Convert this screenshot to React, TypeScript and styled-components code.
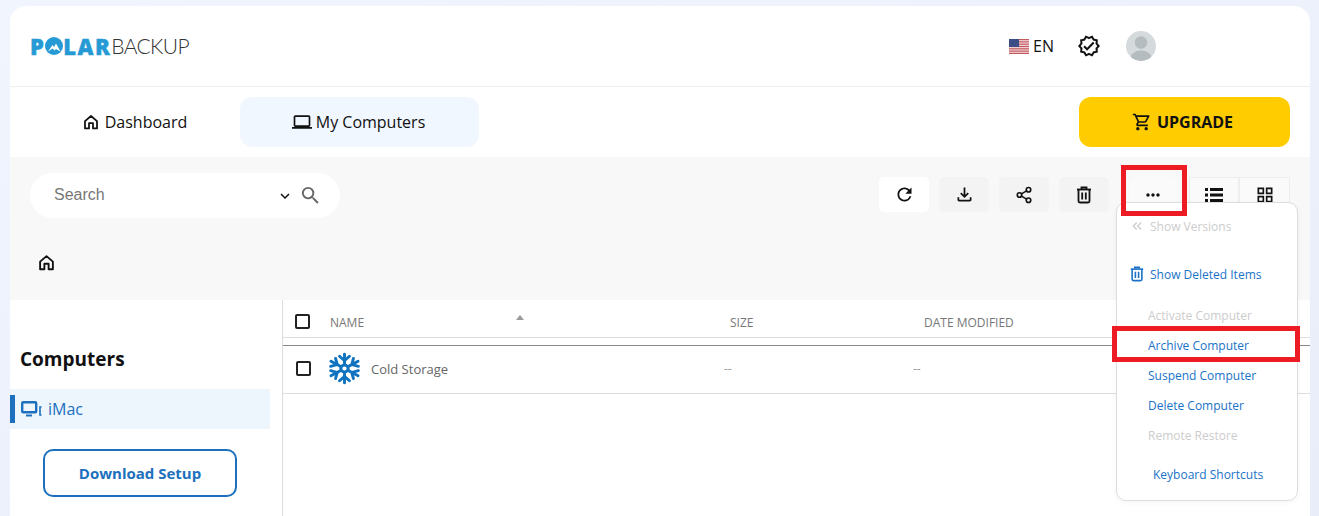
import React from 'react';
import styled, { createGlobalStyle } from 'styled-components';
import {
  MdOutlineFileDownload,
  MdOutlineGridView,
  MdOutlineLaptop,
  MdOutlineShoppingCart,
  MdOutlineVerified,
  MdRefresh,
  MdKeyboardArrowDown,
  MdSearch,
  MdMoreHoriz,
  MdKeyboardDoubleArrowLeft,
} from 'react-icons/md';
import { Share2 } from 'lucide-react';

const GlobalStyle = createGlobalStyle`
  html, body {
    margin: 0;
    padding: 0;
    height: 516px;
    overflow: hidden;
    font-family: "Open Sans", "Noto Sans", sans-serif;
  }
  * {
    box-sizing: border-box;
  }
`;

const HomeIcon = ({ size = 16 }: { size?: number }) => (
  <svg width={size} height={size} viewBox="0 0 20 20" fill="none" stroke="currentColor" strokeWidth="2.2" strokeLinejoin="round">
    <path d="M2.5 9 L10 2.5 L17.5 9 V18 H12.5 V11.5 H7.5 V18 H2.5 Z" />
  </svg>
);

const TrashIcon = ({ size = 18 }: { size?: number }) => (
  <svg width={size} height={size} viewBox="0 0 18 18" fill="none" stroke="currentColor" strokeWidth="1.8">
    <path d="M2 3.5 H16" />
    <path d="M6.5 3 V1.5 H11.5 V3" />
    <path d="M3.5 3.5 V15 Q3.5 16.5 5 16.5 H13 Q14.5 16.5 14.5 15 V3.5" />
    <path d="M7.2 6.5 V13.5 M10.8 6.5 V13.5" />
  </svg>
);

const ListIcon = () => (
  <svg width="18" height="14" viewBox="0 0 18 14" fill="currentColor">
    {[0, 5.5, 11].map((y) => (
      <g key={y}>
        <rect y={y} width="3" height="3" />
        <rect x="5" y={y} width="13" height="3" />
      </g>
    ))}
  </svg>
);

const FlagIcon = () => (
  <svg width="20" height="15" viewBox="0 0 20 15">
    <rect width="20" height="15" fill="#f4dfe0" />
    {[0, 2.3, 4.6, 6.9, 9.2, 11.5, 13.8].map((y) => (
      <rect key={y} y={y} width="20" height="1.2" fill="#c4585f" />
    ))}
    <rect width="10" height="8" fill="#3f4d86" />
  </svg>
);

const AvatarIcon = () => (
  <svg width="30" height="30" viewBox="0 0 30 30">
    <defs>
      <clipPath id="avatar-clip">
        <circle cx="15" cy="15" r="15" />
      </clipPath>
    </defs>
    <g clipPath="url(#avatar-clip)">
      <rect width="30" height="30" fill="#d5dadd" />
      <circle cx="15" cy="11.5" r="6.2" fill="#b4bcbf" />
      <ellipse cx="15" cy="27" rx="10.5" ry="7.5" fill="#b4bcbf" />
    </g>
  </svg>
);

const PeakIcon = () => (
  <svg width="18" height="18" viewBox="0 0 18 18">
    <circle cx="9" cy="9" r="9" fill="#259ad4" />
    <path d="M3 14.5 L7.5 8 L9 10 L11 6.5 L15.5 14.5 L11 12 L9.5 13.5 L7.5 11.5 Z" fill="#ffffff" />
  </svg>
);

const DevicesIcon = () => (
  <svg width="22" height="18" viewBox="0 0 22 18" fill="none" stroke="#1c70bd">
    <rect x="1.2" y="2.2" width="14" height="10" rx="1" strokeWidth="2.4" />
    <path d="M5 15.5 H11" strokeWidth="2" />
    <path d="M20.5 7 H19 V15 H20.5" strokeWidth="1.6" />
  </svg>
);

const SnowflakeIcon = () => (
  <svg width="33" height="33" viewBox="-16.5 -16.5 33 33" fill="none" stroke="#0f73c0" strokeWidth="2.7" strokeLinecap="round">
    <g transform="scale(1.08 1)">
      {[0, 60, 120, 180, 240, 300].map((a) => (
        <g key={a} transform={`rotate(${a})`}>
          <path d="M0 -4 V-14.5" />
          <path d="M-4.6 -12.2 L0 -7.8 L4.6 -12.2" />
        </g>
      ))}
      <circle r="3.4" strokeWidth="2.8" />
    </g>
  </svg>
);

const Page = styled.div`
  height: 516px;
  padding: 6px 9px 0 10px;
  background: linear-gradient(160deg, #f1f5fe 0%, #e9edf9 100%);
  overflow: hidden;
`;

const Card = styled.div`
  position: relative;
  height: 510px;
  background: #ffffff;
  border-radius: 16px 16px 0 0;
`;

const Header = styled.header`
  display: flex;
  align-items: center;
  justify-content: space-between;
  height: 81px;
  padding: 0 154px 0 20px;
  border-bottom: 1px solid #eeeeee;
`;

const Logo = styled.div`
  display: flex;
  align-items: center;
  line-height: 24px;
  height: 24px;
`;

const LogoStrong = styled.span`
  display: inline-flex;
  align-items: center;
  font-size: 22px;
  font-weight: 800;
  color: #259ad4;
  letter-spacing: 1.4px;
  -webkit-text-stroke: 0.4px #259ad4;
`;

const LogoLight = styled.span`
  font-family: "Lato", sans-serif;
  font-size: 21px;
  font-weight: 300;
  color: #333333;
  letter-spacing: -0.6px;
`;

const HeaderTools = styled.div`
  display: flex;
  align-items: center;
`;

const Lang = styled.div`
  display: flex;
  align-items: center;
  gap: 4px;
  font-size: 16px;
  color: #111111;
  margin-right: 23px;
`;

const Verified = styled.div`
  display: flex;
  margin-right: 25px;
`;

const Nav = styled.nav`
  display: flex;
  align-items: center;
  justify-content: space-between;
  height: 70px;
  padding: 0 20px;
`;

const Tabs = styled.div`
  display: flex;
`;

const Tab = styled.a<{ $active?: boolean }>`
  display: flex;
  align-items: center;
  justify-content: center;
  gap: ${(p) => (p.$active ? '4px' : '6px')};
  width: ${(p) => (p.$active ? '239px' : '210px')};
  height: 50px;
  padding-right: ${(p) => (p.$active ? '2px' : '0')};
  border-radius: 12px;
  font-size: 16px;
  color: #111111;
  background: ${(p) => (p.$active ? '#f0f7ff' : 'transparent')};
`;

const UpgradeButton = styled.button`
  display: flex;
  align-items: center;
  justify-content: center;
  gap: 5px;
  width: 211px;
  height: 50px;
  padding: 0 4px 0 0;
  border: 0;
  border-radius: 12px;
  background: #ffcc00;
  color: #111111;
  font-family: inherit;
  font-size: 16px;
  font-weight: 700;
`;

const Toolbar = styled.section`
  height: 143px;
  padding: 16px 20px 0;
  background: #f8f8f8;
`;

const ToolbarRow = styled.div`
  display: flex;
  align-items: flex-start;
  justify-content: space-between;
`;

const Search = styled.div`
  display: flex;
  align-items: center;
  width: 310px;
  height: 45px;
  padding: 0 18px 0 24px;
  border-radius: 23px;
  background: #ffffff;
`;

const SearchText = styled.span`
  flex: 1;
  margin-top: -2px;
  font-family: "Liberation Sans", Arial, sans-serif;
  font-size: 16px;
  color: #777777;
`;

const SearchIcon = styled(MdSearch)`
  margin-left: 5px;
`;

const Actions = styled.div`
  display: flex;
  align-items: center;
  margin-top: 4px;
`;

const ActionButton = styled.button<{ $bg?: string; $gap?: number; $width?: number }>`
  display: flex;
  align-items: center;
  justify-content: center;
  width: ${(p) => p.$width ?? 50}px;
  height: 35px;
  margin-right: ${(p) => p.$gap ?? 10}px;
  padding: 0;
  border: 0;
  border-radius: 5px;
  background: ${(p) => p.$bg ?? '#f3f3f3'};
  color: #111111;
`;

const ViewButton = styled.button<{ $width?: number }>`
  display: flex;
  align-items: center;
  justify-content: center;
  width: ${(p) => p.$width ?? 50}px;
  height: 35px;
  padding: 0;
  border: 1px solid #eeeeee;
  background: #fafafa;
  color: #111111;
`;

const Crumbs = styled.div`
  display: flex;
  margin: 36px 0 0 8px;
  color: #111111;
`;

const Content = styled.main`
  display: flex;
  height: 216px;
`;

const Sidebar = styled.aside`
  width: 273px;
  flex: none;
  padding: 44px 12px 0 0;
  border-right: 1px solid #dddddd;
`;

const SidebarTitle = styled.h2`
  margin: 0 0 15px 10px;
  font-size: 19px;
  line-height: 30px;
  font-weight: 700;
  color: #111111;
`;

const DeviceRow = styled.div`
  display: flex;
  align-items: center;
  gap: 5px;
  height: 40px;
  padding-left: 11px;
  background: #eef6fd;
  color: #1c70bd;
  font-size: 16px;
  position: relative;
  &::before {
    content: '';
    position: absolute;
    left: 0;
    top: 6px;
    width: 5px;
    height: 28px;
    background: #1c70bd;
  }
`;

const DownloadButton = styled.button`
  display: block;
  width: 194px;
  height: 48px;
  margin: 20px 0 0 33px;
  border: 2px solid #1c70bd;
  border-radius: 10px;
  background: #ffffff;
  color: #1c70bd;
  font-family: inherit;
  font-size: 15px;
  font-weight: 700;
`;

const Table = styled.div`
  flex: 1;
  position: relative;
`;

const HeadRow = styled.div`
  display: grid;
  grid-template-columns: 35px 400px 194px 1fr;
  align-items: center;
  height: 38px;
  padding: 6px 0 0 12px;
  border-bottom: 1px solid #dddddd;
  font-size: 12px;
  color: #777777;
`;

const HeadLabel = styled.span`
  margin-top: 1px;
`;

const BodyRow = styled.div`
  display: grid;
  grid-template-columns: 32px 43px 353px 189px 1fr;
  align-items: center;
  height: 49px;
  margin-top: 7px;
  padding: 0 0 2px 13px;
  border-top: 1px solid #888888;
  border-bottom: 1px solid #dddddd;
  font-size: 13px;
  color: #666666;
`;

const CheckBox = styled.span`
  display: block;
  width: 15px;
  height: 15px;
  border: 2px solid #222222;
  border-radius: 2px;
`;

const NameCell = styled.div`
  display: flex;
  align-items: flex-start;
  justify-content: space-between;
  width: 194px;
  margin-top: 1px;
`;

const SortArrow = styled.span`
  display: block;
  width: 0;
  height: 0;
  margin: 1px 0 0;
  border-left: 4px solid transparent;
  border-right: 4px solid transparent;
  border-bottom: 5px solid #999999;
`;

const Dash = styled.span`
  font-size: 12px;
  color: #999999;
`;

const Menu = styled.div`
  position: absolute;
  left: 1106px;
  top: 196px;
  width: 182px;
  height: 299px;
  padding: 8px 0 0 12px;
  border: 1px solid #dddddd;
  border-radius: 10px;
  background: #ffffff;
  box-shadow: 0 2px 6px rgba(0, 0, 0, 0.04);
`;

const MenuItem = styled.div<{ $disabled?: boolean; $top?: number; $indent?: number }>`
  display: flex;
  align-items: center;
  gap: 5px;
  height: 30px;
  margin-top: ${(p) => p.$top ?? 0}px;
  margin-left: ${(p) => p.$indent ?? 0}px;
  font-size: 12px;
  white-space: nowrap;
  color: ${(p) => (p.$disabled ? '#cccccc' : '#1a73c8')};
`;

const RedBox = styled.div`
  position: absolute;
  border: 5px solid #ed1c24;
  pointer-events: none;
`;

const MoreBox = styled(RedBox)`
  left: 1111px;
  top: 159px;
  width: 66px;
  height: 51px;
`;

const ArchiveBox = styled(RedBox)`
  left: 1102px;
  top: 320px;
  width: 188px;
  height: 36px;
`;

const App = () => {
  return (
    <>
      <GlobalStyle />
      <Page>
        <Card>
          <Header>
            <Logo>
              <LogoStrong>
                P<PeakIcon />LAR
              </LogoStrong>
              <LogoLight>BACKUP</LogoLight>
            </Logo>
            <HeaderTools>
              <Lang>
                <FlagIcon />
                EN
              </Lang>
              <Verified>
                <MdOutlineVerified size={24} color="#111111" />
              </Verified>
              <AvatarIcon />
            </HeaderTools>
          </Header>

          <Nav>
            <Tabs>
              <Tab>
                <HomeIcon />
                Dashboard
              </Tab>
              <Tab $active>
                <MdOutlineLaptop size={20} />
                My Computers
              </Tab>
            </Tabs>
            <UpgradeButton>
              <MdOutlineShoppingCart size={20} />
              UPGRADE
            </UpgradeButton>
          </Nav>

          <Toolbar>
            <ToolbarRow>
              <Search>
                <SearchText>Search</SearchText>
                <MdKeyboardArrowDown size={18} color="#111111" />
                <SearchIcon size={23} color="#666666" />
              </Search>
              <Actions>
                <ActionButton $bg="#ffffff">
                  <MdRefresh size={21} />
                </ActionButton>
                <ActionButton>
                  <MdOutlineFileDownload size={21} />
                </ActionButton>
                <ActionButton>
                  <Share2 size={18} strokeWidth={2.2} />
                </ActionButton>
                <ActionButton $gap={20}>
                  <TrashIcon />
                </ActionButton>
                <ActionButton $bg="#fafafa" $gap={12} $width={48}>
                  <MdMoreHoriz size={20} />
                </ActionButton>
                <ViewButton>
                  <ListIcon />
                </ViewButton>
                <ViewButton $width={51}>
                  <MdOutlineGridView size={20} />
                </ViewButton>
              </Actions>
            </ToolbarRow>
            <Crumbs>
              <HomeIcon size={17} />
            </Crumbs>
          </Toolbar>

          <Content>
            <Sidebar>
              <SidebarTitle>Computers</SidebarTitle>
              <DeviceRow>
                <DevicesIcon />
                iMac
              </DeviceRow>
              <DownloadButton>Download Setup</DownloadButton>
            </Sidebar>
            <Table>
              <HeadRow>
                <CheckBox />
                <NameCell>
                  NAME
                  <SortArrow />
                </NameCell>
                <HeadLabel>SIZE</HeadLabel>
                <HeadLabel>DATE MODIFIED</HeadLabel>
              </HeadRow>
              <BodyRow>
                <CheckBox />
                <SnowflakeIcon />
                <span>Cold Storage</span>
                <Dash>--</Dash>
                <Dash>--</Dash>
              </BodyRow>
            </Table>
          </Content>

          <Menu>
            <MenuItem $disabled>
              <MdKeyboardDoubleArrowLeft size={16} />
              Show Versions
            </MenuItem>
            <MenuItem $top={18}>
              <TrashIcon size={16} />
              Show Deleted Items
            </MenuItem>
            <MenuItem $disabled $top={11} $indent={19}>Activate Computer</MenuItem>
            <MenuItem $indent={19}>Archive Computer</MenuItem>
            <MenuItem $indent={19}>Suspend Computer</MenuItem>
            <MenuItem $indent={19}>Delete Computer</MenuItem>
            <MenuItem $disabled $indent={19}>Remote Restore</MenuItem>
            <MenuItem $top={9} $indent={24}>Keyboard Shortcuts</MenuItem>
          </Menu>
          <MoreBox />
          <ArchiveBox />
        </Card>
      </Page>
    </>
  );
};

export default App;
